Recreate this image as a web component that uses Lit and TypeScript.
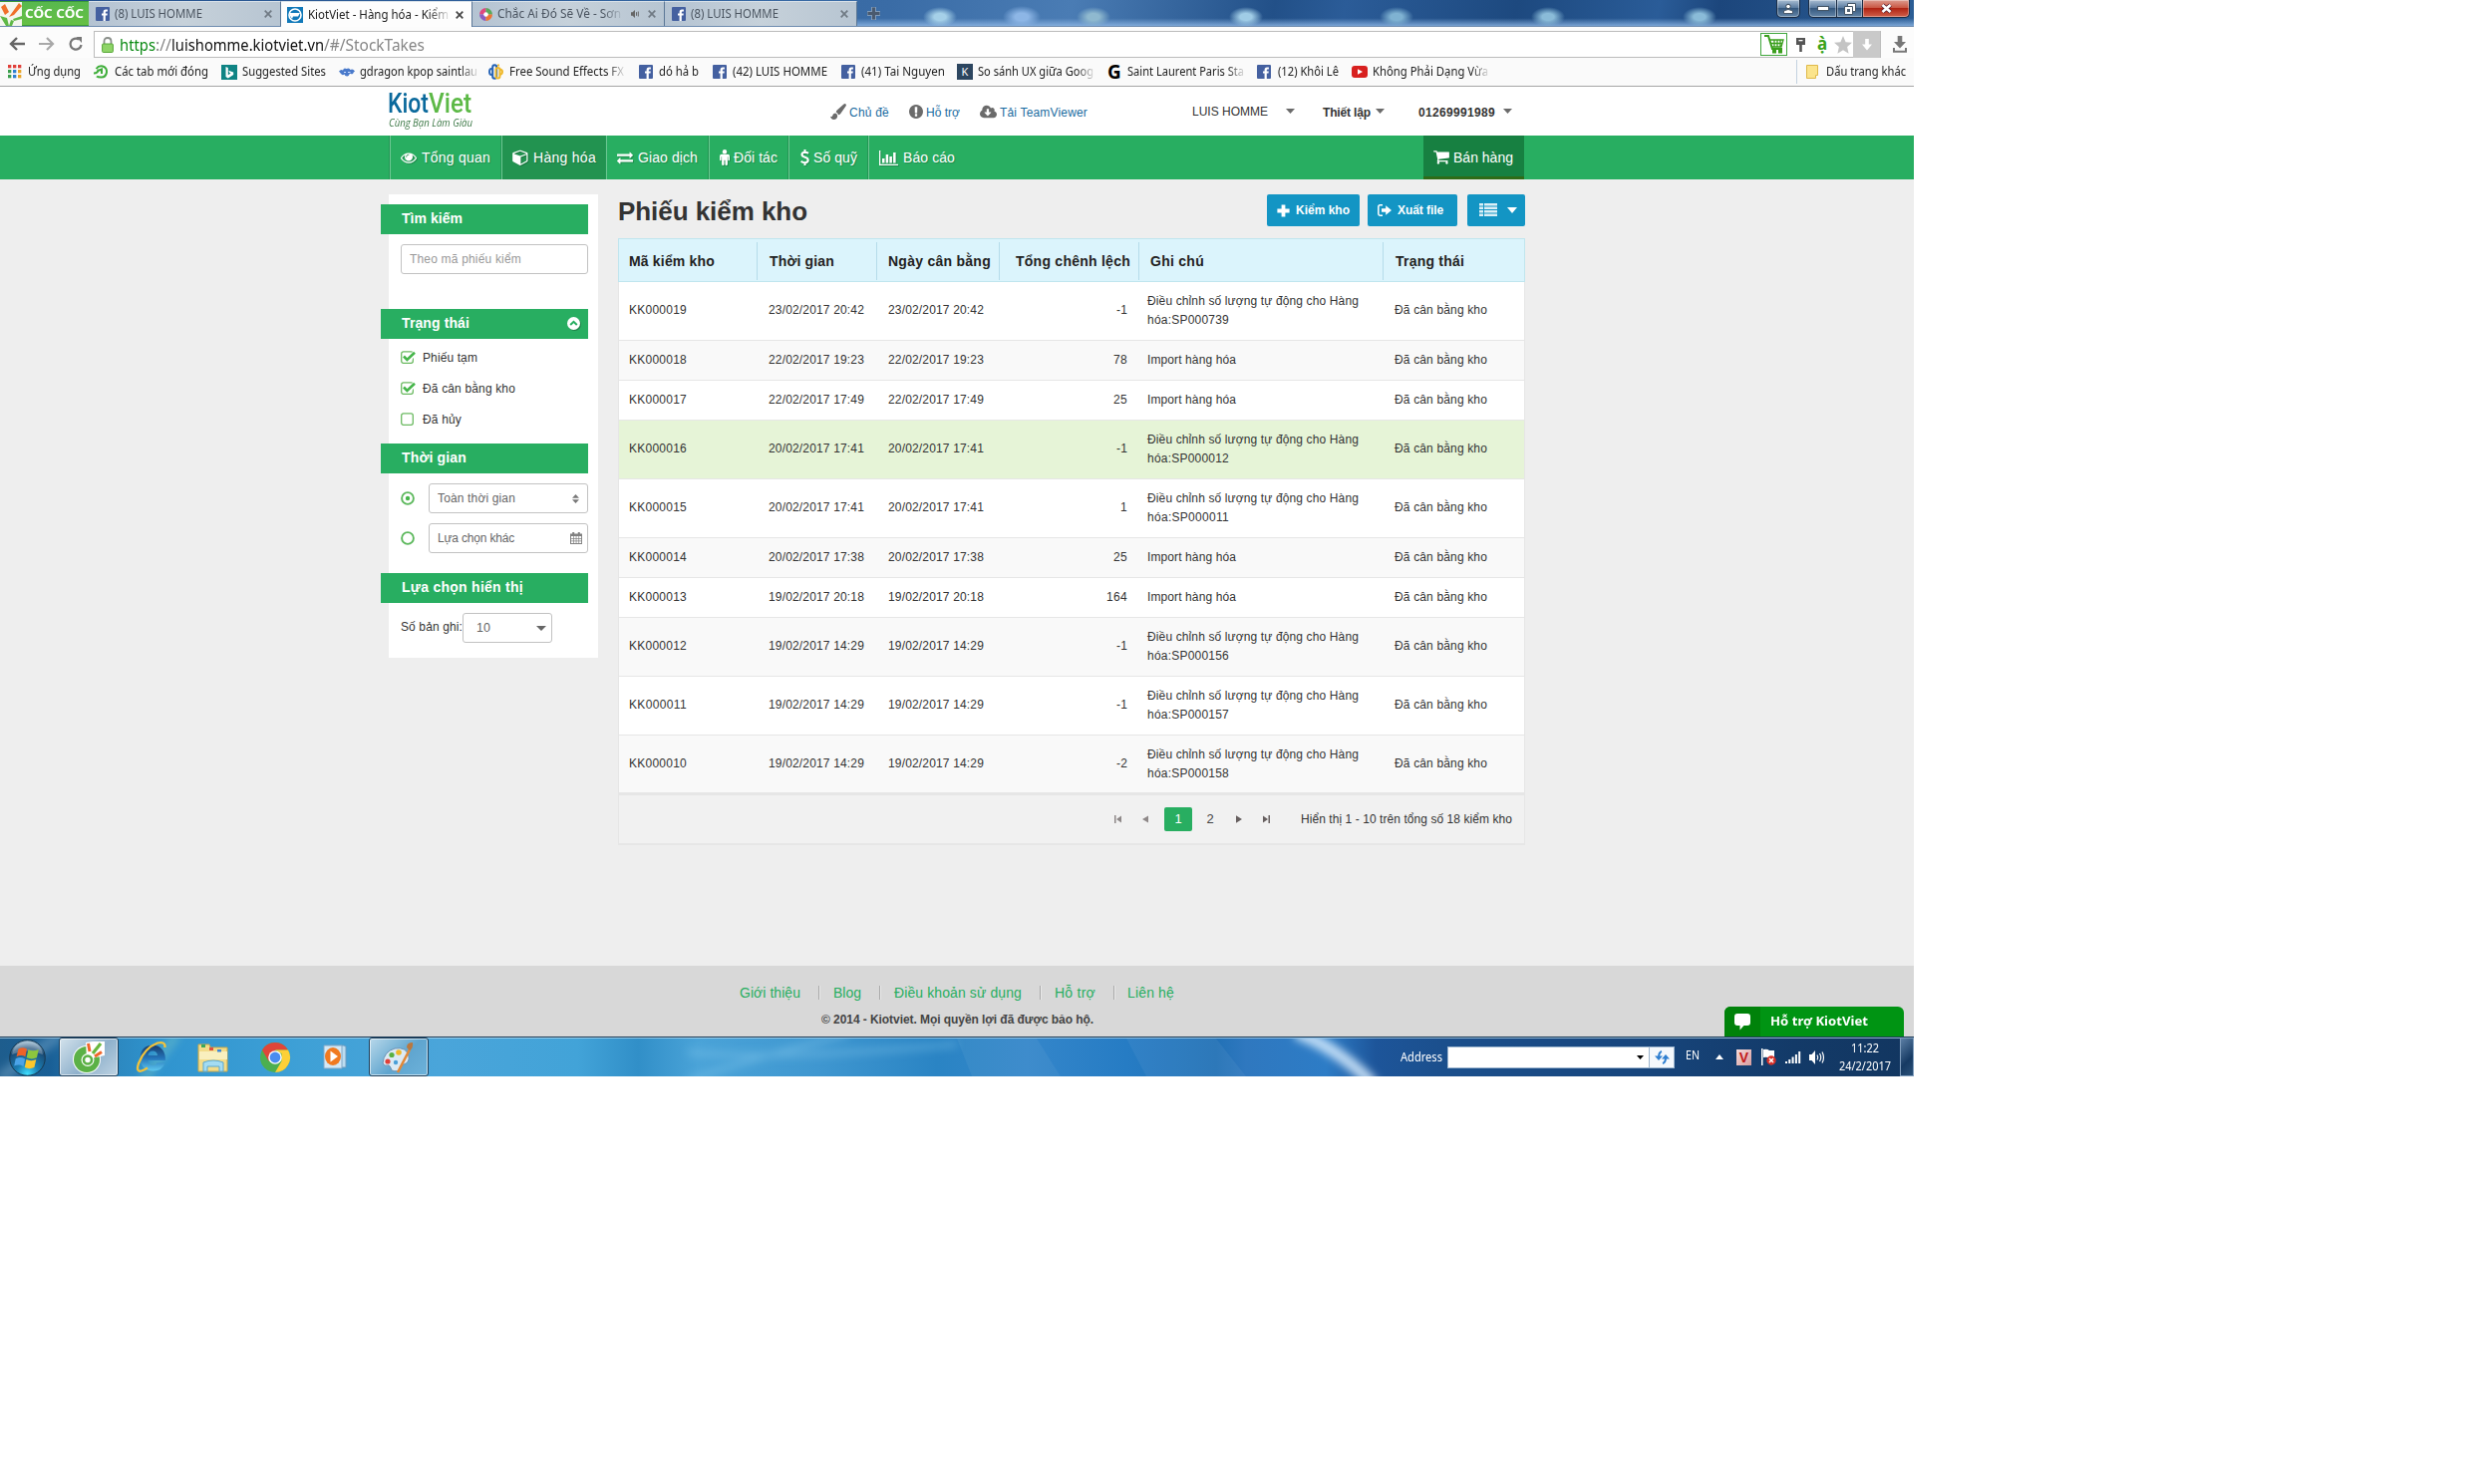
import { LitElement, html, css, svg, nothing } from "lit";
import { customElement, property } from "lit/decorators.js";
import { classMap } from "lit/directives/class-map.js";
import { styleMap } from "lit/directives/style-map.js";

/** One line of text set to an exact measure, by tracking or by squeezing the glyphs. */
@customElement("fit-text")
class FitText extends LitElement {
  @property({ type: Number }) w = 0;
  @property() text = "";
  @property({ type: Boolean }) squeeze = false;
  static styles = css`
    :host { display: inline-block; flex: none; white-space: nowrap; }
    .t { display: inline-block; transform-origin: 0 50%; white-space: pre; }
  `;
  render() {
    return html`<span class="t">${this.text}</span>`;
  }
  updated() {
    const t = this.renderRoot.querySelector<HTMLElement>(".t")!;
    t.style.letterSpacing = "";
    t.style.transform = "";
    this.style.width = `${this.w}px`;
    const natural = t.getBoundingClientRect().width;
    if (this.squeeze) t.style.transform = `scaleX(${this.w / natural})`;
    else t.style.letterSpacing = `${(this.w - natural) / [...this.text].length}px`;
  }
}

const ft = (text: string, w: number) => html`<fit-text .text=${text} .w=${w}></fit-text>`;
const sq = (text: string, w: number) => html`<fit-text .text=${text} .w=${w} squeeze></fit-text>`;
const ico = (w: number, h: number, body: unknown, vb = `0 0 ${w} ${h}`) =>
  html`<svg class="ico" width=${w} height=${h} viewBox=${vb}>${body}</svg>`;

/* ---------- icons ---------- */
const eye = ico(16, 16, svg`<path fill="currentColor" d="M1664 960q-152-236-381-353 61 104 61 225 0 185-131.5 316.5t-316.5 131.5-316.5-131.5-131.5-316.5q0-121 61-225-229 117-381 353 133 205 333.5 326.5t434.5 121.5 434.5-121.5 333.5-326.5zm-720-384q0-20-14-34t-34-14q-125 0-214.5 89.5t-89.5 214.5q0 20 14 34t34 14 34-14 14-34q0-86 61-147t147-61q20 0 34-14t14-34zm848 384q0 34-20 69-140 230-376.5 368.5t-499.5 138.5-499.5-139-376.5-368q-20-35-20-69t20-69q140-229 376.5-368t499.5-139 499.5 139 376.5 368q20 35 20 69z"/>`, "0 0 1792 1792");
const cube = ico(16, 16, svg`<path fill="currentColor" d="M896 1629l640-349v-636l-640 233v752zm-64-865l698-254-698-254-698 254zm832-252v768q0 35-18 65t-49 47l-704 384q-28 16-61 16t-61-16l-704-384q-31-17-49-47t-18-65v-768q0-40 23-73t61-47l704-256q22-8 44-8t44 8l704 256q38 14 61 47t23 73z"/>`, "-20 60 1740 1740");
const exchange = ico(16, 16, svg`<path fill="currentColor" d="M1792 1184v192q0 13-9.500 22.500t-22.500 9.500h-1376v192q0 13-9.500 22.500t-22.500 9.500q-12 0-24-10l-319-320q-9-9-9-22 0-14 9-23l320-320q9-9 23-9 13 0 22.500 9.500t9.500 22.500v192h1376q13 0 22.500 9.500t9.500 22.500zm0-544q0 14-9 23l-320 320q-9 9-23 9-13 0-22.500-9.500t-9.500-22.500v-192h-1376q-13 0-22.500-9.500t-9.500-22.500v-192q0-13 9.500-22.500t22.500-9.500h1376v-192q0-14 9-23t23-9q12 0 24 10l319 319q9 9 9 23z"/>`, "0 0 1792 1792");
const male = ico(10, 16, svg`<circle cx="5" cy="2.200" r="2.200" fill="currentColor"/><path fill="currentColor" d="M2 4.800h6q2 0 2 2v3.500q0 .9-.8.9t-.8-.9V7.200h-.5v7.600q0 1.200-1.200 1.200t-1.200-1.200v-4h-1v4Q4.500 16 3.300 16t-1.200-1.200V7.200h-.5v3.100q0 .9-.8.9T0 10.300V6.800q0-2 2-2z"/>`);
const dollar = ico(9, 16, svg`<path fill="none" stroke="currentColor" stroke-width="2.100" d="M8 3.900Q6.500 2.700 4.500 2.700 1.500 2.800 1.500 5.100 1.500 7 4.500 7.700 7.700 8.500 7.700 10.800 7.600 13.200 4.500 13.300 2.200 13.300 .7 11.800M4.500 0v3M4.500 13v3"/>`);
const chart = ico(19, 15, svg`<path fill="currentColor" d="M0 0h1.300v13.700H19V15H0zM3 8h2.500v4.500H3zM6.700 4h2.500v8.500H6.700zM10.400 6h2.500v6.500h-2.500zM14.100 2h2.500v10.500h-2.500z"/>`);
const cart = ico(16, 16, svg`<path fill="currentColor" d="M704 1536q0 52-38 90t-90 38-90-38-38-90 38-90 90-38 90 38 38 90zm896 0q0 52-38 90t-90 38-90-38-38-90 38-90 90-38 90 38 38 90zm128-1088v512q0 24-16.500 42.500t-40.500 21.500l-1044 122q13 60 13 70 0 16-24 64h920q26 0 45 19t19 45-19 45-45 19h-1024q-26 0-45-19t-19-45q0-11 8-31.500t16-36 21.500-40 15.500-29.500l-177-823h-204q-26 0-45-19t-19-45 19-45 45-19h256q16 0 28.500 6.500t19.500 15.500 13 24.500 8 26 5.500 29.500 4.500 26h1201q26 0 45 19t19 45z"/>`, "60 128 1680 1680");
const brush = ico(16, 16, svg`<path fill="currentColor" d="M15.600.4q.8.800-.1 2.200L10.300 10Q9.200 11.300 8 11.300 7.500 9.200 5.700 8.600 5.900 7.300 7 6.300L13.500.5Q14.800-.4 15.600.4zM5.100 9.600Q7 10.200 7.200 12.200 7 15.900 3.400 16 .6 15.900 0 12.800q1.200.7 2-.2.600-2.800 3.100-3z"/>`);
const exclaim = ico(14, 14, svg`<path fill="currentColor" d="M896 128q209 0 385.500 103t279.500 279.500 103 385.500-103 385.500-279.500 279.500-385.500 103-385.500-103-279.500-279.500-103-385.500 103-385.500 279.500-279.500 385.500-103zm128 1247v-190q0-14-9-23.500t-22-9.500h-192q-13 0-23 10t-10 23v190q0 13 10 23t23 10h192q13 0 22-9.500t9-23.500zm-2-344l18-621q0-12-10-18-10-8-24-8h-220q-14 0-24 8-10 6-10 18l17 621q0 10 10 17.500t24 7.500h185q14 0 23.500-7.500t10.500-17.500z"/>`, "128 128 1536 1536");
const cloud = ico(17, 14, svg`<path fill="currentColor" d="M1216 928q0-14-9-23t-23-9h-224v-352q0-13-9.500-22.500t-22.500-9.500h-192q-13 0-22.500 9.500t-9.500 22.500v352h-224q-13 0-22.500 9.500t-9.500 22.500q0 14 9 23l352 352q9 9 23 9t23-9l351-351q10-12 10-24zm640 224q0 159-112.500 271.500t-271.500 112.500h-1088q-185 0-316.500-131.500t-131.500-316.500q0-130 70-240t188-165q-2-30-2-43 0-212 150-362t362-150q156 0 285.500 87t188.500 231q71-62 166-62 106 0 181 75t75 181q0 76-41 138 130 31 213.500 135.500t83.500 238.500z"/>`, "-64 128 1920 1408");
const plus = ico(13, 13, svg`<path fill="currentColor" d="M4.600.4h3.800v4.200h4.200v3.800H8.400v4.200H4.600V8.400H.4V4.600h4.200z"/>`);
const exportIcon = ico(14, 12, svg`<path fill="none" stroke="currentColor" stroke-width="1.500" d="M5 .8H2.500Q.8.800.8 2.500v7q0 1.700 1.700 1.700H5"/><path fill="currentColor" d="M4 4.200h4.200V1.200L14 6l-5.800 4.800V7.800H4z"/>`);
const list = ico(18, 14, svg`<path fill="currentColor" fill-opacity=".85" d="M0 0h4v2.500H0zM5 0h13v2.500H5zM0 3.500h4V6H0zM5 3.500h13V6H5zM0 7h4v2.500H0zM5 7h13v2.500H5zM0 10.500h4V13H0zM5 10.500h13V13H5z"/>`);
const caret = (w: number, h: number) => ico(w, h, svg`<path fill="currentColor" d=${`M0 0h${w}L${w / 2} ${h}z`}/>`);
const chevron = ico(13, 13, svg`<circle cx="6.500" cy="6.500" r="6.500" fill="#fff"/><path fill="none" stroke="#27ae60" stroke-width="2" d="M3.200 8l3.300-3.200L9.800 8"/>`);
const check = (on: boolean) => ico(15, 13, svg`<rect x=".7" y=".9" width="11.600" height="11.400" rx="2" fill="none" stroke="#6cba62" stroke-width="1.300"/>${on ? svg`<path fill="none" stroke="#fff" stroke-width="4.500" d="M9 8l5-6"/><path fill="none" stroke="#45b549" stroke-width="2.600" d="M3 5.500l3.400 3.500L14 1.700"/>` : nothing}`);
const radio = (on: boolean) => ico(14, 14, svg`<circle cx="7" cy="7" r="5.900" fill="#fff" stroke="#5cb85c" stroke-width="1.900"/>${on ? svg`<circle cx="7" cy="7" r="2.200" fill="#45b549"/>` : nothing}`);
const sort = ico(7, 9, svg`<path fill="#777" d="M0 3.700L3.500 0 7 3.700zM0 5.300h7L3.500 9z"/>`);
const calendar = ico(12, 12, svg`<path fill="#808080" d="M0 1.500h12V12H0zM2.200 0h2v2h-2zM7.800 0h2v2h-2z"/><path fill="#fff" d="M1 4h2v2H1zM3.700 4h2v2h-2zM6.400 4h2v2h-2zM9.100 4h2v2h-2zM1 6.700h2v1.800H1zM3.700 6.700h2v1.800h-2zM6.400 6.700h2v1.800h-2zM9.100 6.700h2v1.800h-2zM1 9.200h2V11H1zM3.700 9.200h2V11h-2zM6.400 9.200h2V11h-2zM9.100 9.200h2V11h-2z"/>`);

const fb = ico(14, 14, svg`<rect width="14" height="14" rx="1" fill="#4460a0"/><path fill="#fff" d="M7.600 14V8.500H6V6.500h1.600V5.200Q7.600 2.600 10 2.600h1.900v2h-1.200q-.9 0-.9.800v1.100h2l-.3 2H9.800V14z"/>`);
const apps = ico(14, 14, svg`${[0, 1, 2].map((r) => [0, 1, 2].map((c) => svg`<rect x=${c * 5} y=${r * 5} width="3.300" height="3.300" fill=${["#e0403a", "#e0403a", "#e0403a", "#3b9e4c", "#2d7fd0", "#e8a325", "#3b9e4c", "#2d7fd0", "#e8a325"][r * 3 + c]}/>`))}`);
const recent = ico(15, 14, svg`<path fill="none" stroke="#3fae3a" stroke-width="2" d="M2.500 4Q5 .6 9 1.500q4.500 1.500 4 6Q12.300 12.500 7.500 12.500 4 12.500 3 11.500M0 8.500Q4.500 8.500 4.500 4.500M4 6l4-1.500V9"/>`);
const bing = ico(16, 15, svg`<rect width="16" height="15" fill="#0f8484"/><path fill="#fff" d="M4.500 2l2.300.9v7.300l2.800-1.600-1.400-.7-.9-2.200 4.900 1.800v2.600l-5.400 3.300-2.300-1.300z"/>`);
const baidu = ico(16, 9, svg`<path fill="#4a7acb" d="M0 3.500Q2 1 4 2.500 5-.5 7.500 1q3-1.500 4 1Q14 .5 16 3.500q-1.500.5-2 2.500-2 .5-3-.3Q9.500 9 8 8.500 6 8.500 5.500 6.500 3.500 8 2 6z"/><path stroke="#cfe0ff" d="M5 4.500h2M9 4.500h2.500"/>`);
const sound = ico(15, 16, svg`<rect x="4.200" y="1.200" width="4" height="13.500" rx="2" fill="none" stroke="#2361b5" stroke-width="2"/><rect x="7.500" y="4" width="4" height="10.500" rx="2" fill="none" stroke="#efb92c" stroke-width="2"/><path fill="none" stroke="#2a66b8" stroke-width="2" d="M5 5H3Q1 5 1 8t2 3h2"/><path fill="none" stroke="#efb92c" stroke-width="2" d="M9 1.500h2M11 5.500q3 0 3 2.500t-3 3"/>`);
const kIcon = html`<span class="k">K</span>`;
const gIcon = html`<span class="g">G</span>`;
const youtube = ico(16, 12, svg`<rect width="16" height="12" rx="3" fill="#d8201f"/><path fill="#fff" d="M6 3.200v5.600L11 6z"/>`);
const kiotTab = ico(16, 16, svg`<rect width="16" height="16" fill="#1179b9"/><circle cx="8" cy="8" r="6" fill="none" stroke="#fff" stroke-width="1.600"/><path fill="#fff" d="M3 6h10L11 9.500H6L5 12 3 9z"/>`);
const musicTab = ico(13, 13, svg`<path fill="#e0487f" d="M6.500 6.500V0A6.500 6.500 0 0 0 0 6.500z"/><path fill="#5ba85a" d="M6.500 6.500H13A6.500 6.500 0 0 0 6.500 0z"/><path fill="#8d5cc0" d="M6.500 6.500V13A6.500 6.500 0 0 1 0 6.500z"/><path fill="#ee7434" d="M6.500 6.500H13A6.500 6.500 0 0 1 6.500 13z"/><circle cx="6.500" cy="6.500" r="2.300" fill="#fff"/>`);
const cross = ico(8, 8, svg`<path stroke="currentColor" stroke-width="1.700" d="M.7.700l6.600 6.600M7.300.7L.7 7.300"/>`);
const speaker = ico(8, 10, svg`<path fill="#666" d="M0 3.300h1.600L4 1v8L1.600 6.700H0z"/><path stroke="#666" fill="none" d="M5.500 3.200v3.600M7.300 2.500v5"/>`);

/* ---------- data ---------- */
const bookmarks = [
  { start: 8, icon: apps, text: "Ứng dụng", at: 28, w: 53 },
  { start: 94, icon: recent, text: "Các tab mới đóng", at: 115, w: 94 },
  { start: 222, icon: bing, text: "Suggested Sites", at: 243, w: 84 },
  { start: 340, icon: baidu, text: "gdragon kpop saintlau", at: 361, w: 118, fade: true },
  { start: 490, icon: sound, text: "Free Sound Effects FX", at: 511, w: 115, fade: true },
  { start: 641, icon: fb, text: "dó hả b", at: 661, w: 40 },
  { start: 715, icon: fb, text: "(42) LUIS HOMME", at: 735, w: 95 },
  { start: 844, icon: fb, text: "(41) Tai Nguyen", at: 864, w: 84 },
  { start: 960, icon: kIcon, text: "So sánh UX giữa Goog", at: 981, w: 116, fade: true },
  { start: 1110, icon: gIcon, text: "Saint Laurent Paris Sta", at: 1131, w: 117, fade: true },
  { start: 1261, icon: fb, text: "(12) Khôi Lê", at: 1282, w: 61 },
  { start: 1356, icon: youtube, text: "Không Phải Dạng Vừa", at: 1377, w: 116, fade: true },
  { start: 1802, icon: nothing, text: "", at: 0, w: 0 },
];

const note = (n: string) => ["Điều chỉnh số lượng tự động cho Hàng", `hóa:SP000${n}`];
const imp = ["Import hàng hóa"];
const rows = [
  { id: "KK000019", time: "23/02/2017 20:42", diff: "-1", note: note("739") },
  { id: "KK000018", time: "22/02/2017 19:23", diff: "78", note: imp },
  { id: "KK000017", time: "22/02/2017 17:49", diff: "25", note: imp },
  { id: "KK000016", time: "20/02/2017 17:41", diff: "-1", note: note("012"), hover: true },
  { id: "KK000015", time: "20/02/2017 17:41", diff: "1", note: note("011") },
  { id: "KK000014", time: "20/02/2017 17:38", diff: "25", note: imp },
  { id: "KK000013", time: "19/02/2017 20:18", diff: "164", note: imp },
  { id: "KK000012", time: "19/02/2017 14:29", diff: "-1", note: note("156") },
  { id: "KK000011", time: "19/02/2017 14:29", diff: "-1", note: note("157") },
  { id: "KK000010", time: "19/02/2017 14:29", diff: "-2", note: note("158") },
];

const menu = [
  { w: 112, pad: 10, icon: eye, gap: 5, text: "Tổng quan", tw: 69 },
  { w: 105, pad: 10, icon: cube, gap: 5, text: "Hàng hóa", tw: 63, active: true },
  { w: 103, pad: 10, icon: exchange, gap: 5, text: "Giao dịch", tw: 60 },
  { w: 80, pad: 10, icon: male, gap: 4, text: "Đối tác", tw: 44 },
  { w: 80, pad: 11, icon: dollar, gap: 4, text: "Số quỹ", tw: 44 },
  { w: 120, pad: 10, icon: chart, gap: 5, text: "Báo cáo", tw: 52 },
];

@customElement("app-root")
class AppRoot extends LitElement {
  static styles = css`
    :host { display: block; width: 2500px; height: 1489px; background: #fff; font: 12px "Liberation Sans", Arial, sans-serif; color: #333; }
    * { box-sizing: border-box; }
    .ico { display: block; flex: none; overflow: visible; }
    .screen { width: 1920px; height: 1080px; display: flex; flex-direction: column; overflow: hidden; }
    .ui { font-family: "Noto Sans", "Open Sans", sans-serif; }

    .strip { height: 27px; display: flex; flex: none; align-items: stretch; border-bottom: 1px solid #6f8db0;
      background:
        radial-gradient(ellipse 17px 10px at 943px 17px, #a5d0e8 35%, transparent),
        radial-gradient(ellipse 19px 11px at 1025px 17px, #8db6e6 35%, transparent),
        radial-gradient(ellipse 17px 10px at 1097px 17px, #8fb9cf 35%, transparent),
        radial-gradient(ellipse 17px 10px at 1250px 17px, #a0cce6 35%, transparent),
        radial-gradient(ellipse 17px 10px at 1401px 17px, #7fb2d2 35%, transparent),
        radial-gradient(ellipse 17px 10px at 1553px 17px, #8abbd8 35%, transparent),
        radial-gradient(ellipse 17px 10px at 1705px 17px, #8abbd8 35%, transparent),
        linear-gradient(180deg, transparent 70%, rgba(150, 190, 235, .75)),
        linear-gradient(100deg, #24518c 0, #3a6ca6 880px, #4a7cb4 1060px, #225088 1260px, #2b5c98 1330px, #1d497f 1500px, #2a5c98 1640px, #1c467c 1700px, #2d6098 1920px); }
    .brand { width: 89px; margin-top: 1px; background: linear-gradient(#58b84e, #66c044); border: 1px solid #3a9a3a; border-width: 1px 0; display: flex; align-items: center; }
    .brand fit-text { color: #fff; font-weight: 700; font-size: 12px; line-height: 24px; margin-left: 3px; }
    .tab { width: 193px; margin-top: 1px; display: flex; align-items: center; padding-left: 7px; border-right: 1px solid #5b7796; background: linear-gradient(90deg, #b4c3d2, #c6d1da 50%, #b7c5d2); color: #4a5460; border-top: 1px solid #d7e0e8; }
    .tab fit-text { margin-left: 5px; line-height: 24px; }
    .tab .x { margin-left: auto; margin-right: 8px; color: #707a84; }
    .tab .spk { margin-left: auto; margin-right: 9px; }
    .tab .spk + .x { margin-left: 0; }
    .tab.on { width: 192px; background: #fdfdfd; height: 27px; color: #222; padding-left: 6px; }
    .tab.on .x { color: #444; }
    .fade { -webkit-mask-image: linear-gradient(90deg, #000 86%, transparent 102%); mask-image: linear-gradient(90deg, #000 86%, transparent 102%); }
    .newtab { margin: 7px 0 0 10px; }
    .win { margin-left: auto; display: flex; align-items: flex-start; padding-right: 4px; }
    .wb { height: 18px; border: 1px solid #1a2c44; border-top: 0; background: linear-gradient(#a9bed3, #52749a 50%, #36597f 50%, #6486a8); display: flex; align-items: center; justify-content: center; box-shadow: inset 0 0 0 1px rgba(255, 255, 255, .35); }
    .wb.user { width: 24px; margin-right: 8px; border-radius: 0 0 5px 5px; }
    .wb.min { width: 29px; border-radius: 0 0 0 5px; }
    .wb.max { width: 26px; border-left: 0; }
    .wb.close { width: 47px; border-left: 0; border-radius: 0 0 5px 0; background: linear-gradient(#dc9c90, #c8503c 50%, #b02414 50%, #d0604a); }

    .tool { height: 31px; flex: none; display: flex; padding: 4px 0 0 9px; background: #fcfcfc; }
    .tool .nav { display: flex; flex: none; align-items: center; height: 26px; width: 85px; }
    .nav .fwd { margin-left: 14px; }
    .nav .rel { margin-left: 15px; }
    .url { width: 1793px; flex: none; height: 27px; border: 1px solid #bcbcbc; background: #fff; display: flex; align-items: center; font-size: 16px; padding-left: 7px; color: #868686; }
    .url fit-text { line-height: 22px; }
    .proto { color: #0b8a14; margin-left: 6px; }
    .host { color: #111; }
    .actions { margin-left: auto; display: flex; align-items: center; height: 25px; }
    .shop { width: 27px; height: 23px; border: 1px solid #41a63d; display: flex; align-items: center; justify-content: center; margin-right: 9px; }
    .lang { color: #3aa31a; font: 700 17px/22px "Noto Sans", sans-serif; width: 10px; margin: -1px 7px 0 12px; }
    .dl { width: 27px; height: 27px; background: #c9c9c9; display: flex; align-items: center; justify-content: center; margin-left: 1px; }
    .tray { margin-left: 12px; margin-top: 5px; }

    .marks { height: 29px; flex: none; display: flex; align-items: center; padding-left: 8px; background: #fafafa; border-bottom: 1px solid #a5a5a5; color: #222; }
    .mark { display: flex; align-items: center; flex: none; height: 28px; }
    .slot { display: flex; align-items: center; flex: none; }
    .mark fit-text, .other fit-text { line-height: 26px; }
    .other { display: flex; align-items: center; height: 24px; border-left: 1px solid #c3d2e0; padding-left: 9px; }
    .other fit-text { margin-left: 8px; }
    .k { width: 16px; height: 16px; background: #2d4660; color: #fff; font: 11px/16px "Noto Sans", sans-serif; text-align: center; }
    .g { width: 16px; color: #000; font: 700 19px/20px "Open Sans", sans-serif; text-align: center; }

    .head { height: 49px; flex: none; display: flex; background: #fff; padding-left: 389px; }
    .logo { width: 85px; margin-right: 359px; font-family: Roboto, sans-serif; height: 49px; padding-top: 5px; color: #0a699c; font-size: 28px; font-weight: 500; }
    .logo .name { display: flex; line-height: 26px; margin-top: -1px; }
    .logo .viet { color: #5cb946; }
    .logo .tag { font: italic 500 11px/13px "Open Sans", sans-serif; color: #3c7846; display: block; margin: -1px 0 0 1px; }
    .links { display: flex; align-items: center; height: 49px; color: #6b6b6b; }
    .links a { color: #1a6ba0; margin: 2px 0 0 3px; }
    .links .l2 { margin-left: 20px; }
    .links .user { color: #333; margin-left: 105px; }
    .links .b { font-weight: 700; color: #333; margin-top: 2px; }
    .links .setup { margin-left: 28px; }
    .links .phone { margin-left: 34px; }
    .links fit-text { line-height: 18px; }
    .c1 { margin-left: 18px; } .c2 { margin-left: 5px; } .c3 { margin-left: 8px; }

    .menu { height: 44px; flex: none; background: #28ae61; display: flex; padding-left: 391px; color: #fff; font-size: 14px; }
    .mi { display: flex; align-items: center; border-left: 1px solid #6cc892; box-shadow: -1px 0 0 #239654; }
    .mi fit-text { text-shadow: 1px 1px 1px rgba(0, 0, 0, .2); line-height: 20px; }
    .mi .ico { filter: drop-shadow(1px 1px 0 rgba(0, 0, 0, .2)); }
    .mi.active { background: #229350; }
    .sell { margin-left: auto; margin-right: 391px; width: 101px; background: #178041; border-bottom: 3px solid #2f6b17; display: flex; align-items: center; padding: 3px 0 0 10px; }
    .sell fit-text { margin-left: 4px; line-height: 20px; }

    .page { height: 789px; flex: none; background: #eee; display: flex; align-items: flex-start; padding: 15px 0 0 390px; }
    .side { width: 210px; height: 465px; background: #fff; padding: 10px 10px 0 0; }
    .sh { margin-left: -8px; height: 30px; background: #28ae61; color: #fff; font-weight: 700; font-size: 14px; display: flex; align-items: center; justify-content: space-between; padding: 0 8px 2px 21px; }
    .sh .ico { filter: drop-shadow(1px 1px 0 rgba(0, 0, 0, .25)); }
    .field { height: 30px; border: 1px solid #c2c2c2; border-radius: 3px; display: flex; align-items: center; background: #fff; color: #666; padding: 0 8px; justify-content: space-between; }
    .search { margin: 10px 0 35px 12px; color: #999; }
    .checks { height: 105px; padding: 3px 0 0 12px; }
    .ck { height: 31px; display: flex; align-items: center; }
    .ck fit-text { margin-left: 7px; line-height: 20px; margin-top: 1px; }
    .rad { display: flex; align-items: center; padding-left: 12px; margin-top: 10px; }
    .rad .field { width: 160px; margin-left: 14px; }
    .rad .field.cal { padding-right: 5px; }
    .rad + .sh { margin-top: 20px; }
    .count { display: flex; align-items: center; padding-left: 12px; margin-top: 10px; }
    .count > fit-text { margin-top: -2px; }
    .count .field { width: 90px; padding: 0 5px 0 13px; font-size: 12.5px; color: #666; }

    .main { width: 910px; margin-left: 20px; }
    .top { display: flex; height: 44px; align-items: flex-start; }
    .top h1 { margin: 0 auto 0 0; font-size: 26px; line-height: 34px; color: #333; font-weight: 700; }
    .btn { height: 32px; background: #1395c4; color: #fff; border-radius: 2px; font-weight: 700; display: flex; align-items: center; padding-left: 10px; }
    .btn fit-text { margin-left: 6px; line-height: 20px; }
    .b1 { width: 93px; margin-right: 8px; } .b2 { width: 90px; margin-right: 10px; } .b3 { width: 58px; padding: 0 0 1px 12px; }
    .b3 .ico + .ico { margin-left: 10px; }
    .grid-head, .row { display: grid; grid-template-columns: 139px 120px 123px 140px 245px 1fr; }
    .grid-head { height: 44px; background: #dbf4fc; border: 1px solid #c0e5ee; font-weight: 700; font-size: 14px; color: #222; }
    .grid-head div { height: 38px; margin-top: 3px; border-right: 1px solid #b5dcea; display: flex; align-items: center; padding: 0 0 1px 11px; }
    .grid-head div:first-child { padding-left: 10px; }
    .grid-head div:nth-child(2) { padding-left: 12px; }
    .grid-head div:last-child { border: 0; padding-left: 12px; }
    .grid-head div.r { padding-left: 16px; }
    .body { border: 1px solid #e6e6e6; border-top: 0; }
    .row { border-bottom: 1px solid #e6e6e6; padding: 10px 0; background: #fff; align-items: center; line-height: 19px; }
    .row:nth-child(even) { background: #f9f9f9; }
    .row.hover { background: #e6f4d7; }
    .row:last-child { border: 0; padding-bottom: 9px; }
    .row div { padding-left: 10px; display: flex; flex-direction: column; align-items: flex-start; }
    .row div.wide { padding-left: 11px; }
    .row div.r { align-items: flex-end; padding-right: 12px; }
    .row.tall > div:not(.note) { padding-bottom: 1px; margin-top: -1px; }
    .row fit-text { height: 19px; }
    .row .note { padding-left: 8px; }
    .pager { height: 52px; border: solid #e6e6e6; border-width: 2px 1px; background: #f1f1f1; display: flex; align-items: center; padding: 0 0 1px 497px; color: #665f5f; }
    .pager .dim { color: #8e8888; }
    .pg { width: 28px; height: 24px; border-radius: 2px; font-size: 13px; line-height: 23px; text-align: center; color: #444; }
    .pg.on { background: #28ae61; color: #fff; margin: 0 4px 0 16px; }
    .sp1 { margin-left: 21px; } .sp2 { margin-left: 12px; }
    .pager fit-text { color: #333; margin-left: 31px; line-height: 20px; }

    .foot { height: 71px; flex: none; background: #d8d8d8; display: flex; }
    .fl { width: 1730px; padding-top: 18px; }
    .fnav { display: flex; align-items: center; padding-left: 742px; height: 18px; font-size: 14px; color: #28ae61; }
    .fnav i { width: 1px; height: 14px; background: #aaa; box-shadow: 1px 0 0 #e8e8e8; margin: 0 14px 0 18px; }
    .fnav i:last-of-type { margin-right: 13px; }
    .fnav fit-text { line-height: 18px; }
    .copy { padding-left: 824px; margin-top: 9px; font-weight: 700; color: #444; line-height: 18px; }
    .chat { align-self: flex-end; width: 180px; height: 30px; background: #009413; border-radius: 6px 6px 0 0; display: flex; align-items: center; overflow: hidden; color: #fff; font-weight: 700; font-size: 13px; }
    .chat .bub { width: 36px; height: 30px; background: #00820a; display: flex; align-items: center; justify-content: center; }
    .chat fit-text { margin-left: 10px; line-height: 26px; margin-top: -2px; }

    .task { height: 40px; flex: none; border-top: 1px solid #1b3a56; display: flex; align-items: center; color: #fff; box-shadow: inset 0 1px 0 rgba(190, 225, 245, .7); position: relative;
      background: linear-gradient(90deg, #1e5d8d 0, #195f96 50px, #2c86bd 110px, #2f94cf 160px, #3ea0d6 300px, #4aa5da 440px, #42a3d8 580px, #318fc8 640px, #4aa3d8 700px, #3f97d0 820px, #2a84c4 940px, #3486ca 1030px, #267cc4 1130px, #2271b6 1220px, #2f78bf 1250px, #2d7cc6 1330px, #1d559a 1380px, #1b4f8c 1450px, #17457c 1650px, #133a68 1800px, #123660 1920px); }
    .beams { position: absolute; left: 0; top: 1px; }
    .task > :not(.beams) { position: relative; }
    .orb { margin-left: 9px; margin-top: 1px; }
    .tb { height: 39px; width: 60px; border: 1px solid #1c3f5c; border-radius: 3px; box-shadow: inset 0 0 0 1px rgba(255, 255, 255, .6); display: flex; align-items: center; justify-content: center; }
    .tb.cc { margin-left: 13px; background: linear-gradient(135deg, #d3e2ec, #8fb1cc 55%, #bed3e2); }
    .tb.pt { margin-left: 18px; background: linear-gradient(135deg, #b8d8ea, #5fa5cf 55%, #6db2da); }
    .q1 { margin-left: 17px; } .q2 { margin-left: 31px; } .q3 { margin-left: 31px; } .q4 { margin-left: 33px; }
    .addr { margin-left: auto; }
    .task fit-text { line-height: 18px; }
    .abox { width: 203px; height: 22px; background: #fff; margin-left: 5px; border: 1px solid #9db6cf; display: flex; align-items: center; justify-content: flex-end; padding-right: 5px; color: #000; }
    .go { width: 25px; height: 22px; background: #f4f8fc; border: 1px solid #9db6cf; border-left: 0; display: flex; align-items: center; justify-content: center; }
    .en { margin-left: 11px; margin-top: -4px; }
    .t1 { margin-left: 16px; } .t2 { margin-left: 13px; } .t3 { margin-left: 9px; } .t4 { margin-left: 9px; } .t5 { margin-left: 8px; }
    .v { width: 15px; height: 16px; background: linear-gradient(135deg, #f5dcdc, #d89c9c); color: #c01818; font: 700 14px/16px "Liberation Sans", sans-serif; text-align: center; }
    .clock { width: 52px; margin-left: 15px; display: flex; flex-direction: column; align-items: center; }
    .desk { width: 14px; height: 39px; margin-left: 9px; border: 1px solid #7f9dbd; background: linear-gradient(135deg, #5c7fa5, #163a63 60%, #2a5078); }
  `;

  private tabStrip() {
    return html`<div class="strip ui">
      <div class="brand">${ico(22, 24, svg`<rect width="22" height="24" fill="#f4f6ee"/><path fill="#f0702a" d="M1 5l4-3 4 8-4 3zM19 1l3 3-8 9-5 2z"/><path fill="#5fb947" d="M22 14v3l-8 2-1-2zM0 14l7 2 2 8H6zM11 18l3 1-2 5H9z"/>`)}${sq("CỐC CỐC", 59)}</div>
      <div class="tab">${fb}${sq("(8) LUIS HOMME", 88)}<span class="x">${cross}</span></div>
      <div class="tab on">${kiotTab}<span class="fade">${sq("KiotViet - Hàng hóa - Kiểm", 141)}</span><span class="x">${cross}</span></div>
      <div class="tab">${musicTab}<span class="fade">${sq("Chắc Ai Đó Sẽ Về - Sơn", 124)}</span><span class="spk">${speaker}</span><span class="x">${cross}</span></div>
      <div class="tab">${fb}${sq("(8) LUIS HOMME", 88)}<span class="x">${cross}</span></div>
      <div class="newtab">${ico(13, 13, svg`<path stroke="#e8e0d8" stroke-opacity=".4" stroke-width="5" d="M6.500 0v13M0 6.500h13"/><path stroke="#4a5a6e" stroke-width="3" d="M6.500 .5v12M.5 6.500h12"/>`)}</div>
      <div class="win">
        <span class="wb user">${ico(10, 10, svg`<circle cx="5" cy="2.500" r="2.300" fill="#fff" stroke="#345"/><path d="M.5 9.500V7Q5 4 9.500 7v2.500z" fill="#fff" stroke="#345" stroke-width=".8"/>`)}</span>
        <span class="wb min">${ico(12, 5, svg`<rect x=".5" y=".5" width="11" height="4" fill="#fff" stroke="#456"/>`)}</span>
        <span class="wb max">${ico(12, 12, svg`<path fill="#fff" stroke="#456" d="M3.500.5h8v8h-8z"/><path fill="#fff" stroke="#456" d="M.5 3.500h8v8h-8z"/><path fill="#567" d="M3 6h3v3H3z"/>`)}</span>
        <span class="wb close">${ico(11, 9, svg`<path stroke="#523" stroke-width="4.200" d="M1.500 1l8 7M9.500 1l-8 7"/><path stroke="#fff" stroke-width="2.600" d="M1.500 1l8 7M9.500 1l-8 7"/>`)}</span>
      </div>
    </div>`;
  }

  private toolbar() {
    return html`<div class="tool ui">
      <div class="nav">
        ${ico(16, 14, svg`<path fill="none" stroke="#666" stroke-width="2.400" d="M16 7H2M8 1L2 7l6 6"/>`)}
        <span class="fwd">${ico(15, 14, svg`<path fill="none" stroke="#a8a8a8" stroke-width="2.200" d="M0 7h13M8 1l6 6-6 6"/>`)}</span>
        <span class="rel">${ico(14, 14, svg`<path fill="none" stroke="#777" stroke-width="2.300" d="M10 2.500A5.500 5.500 0 1 0 12.500 8"/><path fill="#777" d="M7.500 0h5.500v6z"/>`)}</span>
      </div>
      <div class="url">
        ${ico(12, 16, svg`<path fill="none" stroke="#8a8f8a" stroke-width="1.800" d="M2.500 8V4.500Q2.500 1 6 1t3.500 3.500V8"/><rect x=".6" y="7" width="10.800" height="8.500" rx="1" fill="#8fd468" stroke="#58a738"/>`)}
        <span class="proto">${sq("https", 36)}</span>${sq("://", 16)}<span class="host">${sq("luishomme.kiotviet.vn", 153)}</span>${sq("/#/StockTakes", 101)}
        <div class="actions">
          <span class="shop">${ico(20, 20, svg`<path fill="none" stroke="#3a9f1c" stroke-width="2" d="M0 1h4l4 13h10"/><path fill="none" stroke="#3a9f1c" stroke-width="1.300" d="M6 5h13l-2 7H8M6.500 8.500h12M10 5v7M13 5v7M16 5v7"/><path fill="#3a9f1c" d="M8 15h4v3.500H8zM14 15h4v3.500h-4z"/>`)}</span>
          ${ico(9, 14, svg`<path fill="#555" d="M0 0h9v7H5.800v7H3.200V7H0z"/><path fill="#fff" d="M2.500 2h4v1.300h-4z"/>`)}
          <span class="lang">ạ̀</span>
          ${ico(18, 18, svg`<path fill="#c4c4c4" d="M9 0l2.600 6.200 6.400.6-4.900 4.300 1.500 6.600L9 14.300l-5.600 3.400 1.500-6.600L0 6.800l6.400-.6z"/>`)}
          <span class="dl">${ico(10, 12, svg`<path fill="#fff" d="M3.200 0h3.600v5.500H10L5 11.500 0 5.500h3.200z"/>`)}</span>
        </div>
      </div>
      <div class="tray">${ico(14, 17, svg`<path fill="#777" d="M4.700 0h4.600v6H13l-6 6.500L1 6h3.700zM0 12h2v2.700h10V12h2v4.700H0z"/>`)}</div>
    </div>`;
  }

  private bookmarkBar() {
    return html`<div class="marks ui">
      ${bookmarks.slice(0, -1).map((b, i) => html`<div class="mark" style=${styleMap({ width: `${bookmarks[i + 1].start - b.start}px` })}>
        <span class="slot" style=${styleMap({ width: `${b.at - b.start}px` })}>${b.icon}</span>
        <span class=${classMap({ fade: !!b.fade })}>${sq(b.text, b.w)}</span>
      </div>`)}
      <div class="other">${ico(12, 14, svg`<path fill="#fbe48c" stroke="#dfb94a" d="M.5.500h11v10h-2v3h-9z"/>`)}${sq("Dấu trang khác", 80)}</div>
    </div>`;
  }

  private header() {
    return html`<div class="head">
      <div class="logo">
        <div class="name">${sq("Kiot", 41)}<span class="viet">${sq("Viet", 43)}</span></div>
        <span class="tag">${sq("Cùng Bạn Làm Giàu", 84)}</span>
      </div>
      <div class="links">
        ${brush}<a>${ft("Chủ đề", 40)}</a>
        <span class="l2">${exclaim}</span><a>${ft("Hỗ trợ", 34)}</a>
        <span class="l2">${cloud}</span><a>${ft("Tải TeamViewer", 88)}</a>
        <span class="user">${ft("LUIS HOMME", 76)}</span><span class="c1">${caret(9, 5)}</span>
        <span class="b setup">${ft("Thiết lập", 48)}</span><span class="c2">${caret(9, 5)}</span>
        <span class="b phone">${ft("01269991989", 77)}</span><span class="c3">${caret(9, 5)}</span>
      </div>
    </div>
    <div class="menu">
      ${menu.map((m) => html`<div class=${classMap({ mi: true, active: !!m.active })} style=${styleMap({ width: `${m.w}px`, paddingLeft: `${m.pad}px`, gap: `${m.gap}px` })}>${m.icon}${ft(m.text, m.tw)}</div>`)}
      <div class="sell">${cart}${ft("Bán hàng", 60)}</div>
    </div>`;
  }

  private sidebar() {
    return html`<div class="side">
      <div class="sh">${ft("Tìm kiếm", 61)}</div>
      <div class="field search">${ft("Theo mã phiếu kiểm", 112)}</div>
      <div class="sh">${ft("Trạng thái", 68)}${chevron}</div>
      <div class="checks">
        <div class="ck">${check(true)}${ft("Phiếu tạm", 55)}</div>
        <div class="ck">${check(true)}${ft("Đã cân bằng kho", 93)}</div>
        <div class="ck">${check(false)}${ft("Đã hủy", 39)}</div>
      </div>
      <div class="sh">${ft("Thời gian", 65)}</div>
      <div class="rad">${radio(true)}<div class="field">${ft("Toàn thời gian", 78)}${sort}</div></div>
      <div class="rad">${radio(false)}<div class="field cal">${ft("Lựa chọn khác", 77)}${calendar}</div></div>
      <div class="sh">${ft("Lựa chọn hiển thị", 122)}</div>
      <div class="count">${ft("Số bản ghi:", 62)}<div class="field">${ft("10", 14)}${caret(10, 5)}</div></div>
    </div>`;
  }

  private table() {
    const line = (t: string) => ft(t, t.startsWith("Đ") ? 212 : t.startsWith("I") ? 89 : 82);
    return html`
      <div class="grid-head">
        <div>${ft("Mã kiểm kho", 86)}</div><div>${ft("Thời gian", 65)}</div><div>${ft("Ngày cân bằng", 103)}</div>
        <div class="r">${ft("Tổng chênh lệch", 115)}</div><div>${ft("Ghi chú", 54)}</div><div>${ft("Trạng thái", 69)}</div>
      </div>
      <div class="body">
        ${rows.map((r) => html`<div class=${classMap({ row: true, tall: r.note.length > 1, hover: !!r.hover })}>
          <div>${ft(r.id, 58)}</div><div class="wide">${ft(r.time, 96)}</div><div class="wide">${ft(r.time, 96)}</div>
          <div class="r">${ft(r.diff, r.diff[0] === "-" ? 11 : r.diff.length * 7)}</div>
          <div class="note">${r.note.map(line)}</div><div class="wide">${ft("Đã cân bằng kho", 93)}</div>
        </div>`)}
      </div>
      <div class="pager">
        <span class="dim">${ico(7, 8, svg`<path fill="currentColor" d="M0 0h1.500v8H0zM7 .5v7L2 4z"/>`)}</span>
        <span class="dim sp1">${ico(6, 8, svg`<path fill="currentColor" d="M6 .5v7L0 4z"/>`)}</span>
        <span class="pg on">1</span><span class="pg">2</span>
        <span class="sp2">${ico(6, 8, svg`<path fill="currentColor" d="M0 .3v7.400L6 4z"/>`)}</span>
        <span class="sp1">${ico(7, 8, svg`<path fill="currentColor" d="M5.500 0H7v8H5.500zM0 .5v7L5 4z"/>`)}</span>
        ${ft("Hiển thị 1 - 10 trên tổng số 18 kiểm kho", 212)}
      </div>`;
  }

  private taskbar() {
    return html`<div class="task ui">
      <svg class="beams" width="1920" height="38" viewBox="0 0 1920 38">
        <defs><filter id="b" filterUnits="userSpaceOnUse" x="0" y="-20" width="1920" height="80"><feGaussianBlur stdDeviation="4"/></filter></defs>
        <g filter="url(#b)" fill="none">
          <path stroke="#dbeeff" stroke-width="12" stroke-opacity=".85" d="M1300 -6Q1340 8 1378 46"/>
          <path stroke="#a8e8c0" stroke-width="7" stroke-opacity=".35" d="M178 -4L142 44"/>
          <path stroke="#9fc4dc" stroke-width="12" stroke-opacity=".35" d="M60 -4L0 40"/>
          <path stroke="#8fd0f0" stroke-width="5" stroke-opacity=".4" d="M690 42Q760 18 850 -4M690 14Q780 22 960 6"/>
        </g>
        <path fill="#fff" fill-opacity=".05" d="M960 0h80l24 38H975zM1130 0h90l30 38h-100z"/>
      </svg>
      <span class="orb">${ico(37, 37, svg`<defs><radialGradient id="o" cx=".5" cy=".95" r=".9"><stop offset="0" stop-color="#3fe0ff"/><stop offset=".35" stop-color="#1b7fb5"/><stop offset=".8" stop-color="#1a4a74"/><stop offset="1" stop-color="#8fb0c8"/></radialGradient></defs><circle cx="18.500" cy="18.500" r="17.800" fill="url(#o)" stroke="#17384f"/><path fill="#fff" fill-opacity=".28" d="M3 15Q5 3 18.500 2 32 3 34 15 18 8 3 15z"/><path fill="#ee6228" d="M9.500 9.500q4-2.500 8.500 0l-1.600 7.700q-4-2.500-8.900 0z"/><path fill="#8cc63e" d="M19.300 10.200q5 2.300 10.500-.2l-1.900 8.300q-5 2.300-10.200 0z"/><path fill="#4ba3e8" d="M6.700 19.200q4.700-2.300 9.400.2l-1.600 7.500q-4.500-2.500-9.300-.3z"/><path fill="#fbc72c" d="M17.400 20q4.900 2.300 9.900 0l-1.900 8q-4.900 2.300-9.600 0z"/>`)}</span>
      <span class="tb cc">${ico(32, 32, svg`<ellipse cx="14" cy="18" rx="14" ry="14" fill="#fff"/><ellipse cx="14" cy="18" rx="13" ry="13" fill="#5bb146"/><path fill="#fff" d="M14 18L13 1 20 0 32 0 32 14z"/><circle cx="15" cy="18.500" r="6.500" fill="#fff"/><circle cx="15" cy="18.500" r="4" fill="none" stroke="#5bb146" stroke-width="2.600"/><path stroke="#f0662a" stroke-width="3" d="M17 10l-1.500-8M22 15l7-4.500"/><path stroke="#67b83e" stroke-width="3.200" d="M20 12l8-10"/>`)}</span>
      <span class="q1">${ico(31, 31, svg`<defs><linearGradient id="ie" x2="0" y2="1"><stop offset="0" stop-color="#173a6a"/><stop offset=".5" stop-color="#2373b8"/><stop offset="1" stop-color="#5fc8f0"/></linearGradient></defs><path fill="url(#ie)" d="M17 3.500Q30 4.500 30 19H12.500q.5 5 5 5 3 0 4-2.500h8Q27 29.500 17.500 29.500 5 29 4.500 16.500 5 4.500 17 3.500zM12.500 14h9.500q-.5-4.500-4.800-4.500-4.200 0-4.700 4.500z"/><path fill="none" stroke="#f3c33a" stroke-width="2.300" d="M29.500 6Q30-.5 22 1.500 9 6.500 3 22q-3 9 3 7.500 3-1 6-3"/>`)}</span>
      <span class="q2">${ico(32, 30, svg`<path fill="#f2dc8a" stroke="#c9a94a" d="M1 2h11l1 3h17v24H1z"/><path fill="#f9efbe" d="M2 9h28v8H2z"/><path fill="#3aa85a" d="M4 2h4v3H4z"/><path fill="#e05040" d="M12 5h4v3h-4z"/><path fill="#3c86d8" d="M20 7h4v2.500h-4z"/><path fill="#a4dcf2" stroke="#5ba8d0" d="M6 20q10-4 20 0v9h-4v-5H10v5H6z"/>`)}</span>
      <span class="q3">${ico(30, 30, svg`<circle cx="15" cy="15" r="15" fill="#4caf50"/><path fill="#e0453a" d="M15 15L2 7.500A15 15 0 0 1 28 7.500H15z"/><path fill="#e0453a" d="M2 7.500L8.500 18.800 15 7.500z"/><path fill="#fdd037" d="M28 7.500A15 15 0 0 1 15 30l6.500-11.200L21.500 11 15 7.500z"/><circle cx="15" cy="15" r="6.800" fill="#fff"/><circle cx="15" cy="15" r="5.400" fill="#4a8cf0"/>`)}</span>
      <span class="q4">${ico(28, 25, svg`<path fill="#bcdcf0" stroke="#6c9cc0" d="M8 1h13l2 1v21H8z"/><path fill="#d2e8f6" stroke="#7fa8c8" d="M1 1h18v23H1z"/><ellipse cx="10" cy="12" rx="8" ry="9" fill="#f07a20"/><path fill="#fff" d="M7.500 6.500v11l7.500-5.500z"/>`)}</span>
      <span class="tb pt">${ico(34, 32, svg`<path fill="#dceaf4" stroke="#6d93b4" d="M1 22Q2 10 13 7q12-2 14 8 1 6-5 8-4 1-4 5-2 3-8 1-2-6-4-5-3 1-5-2z"/><circle cx="6" cy="20" r="2.600" fill="#e04038"/><circle cx="10" cy="13.500" r="2.600" fill="#58b040"/><circle cx="17" cy="11" r="2.800" fill="#f0b828"/><circle cx="14" cy="21" r="2.200" fill="#4a9fd8"/><path stroke="#e08838" stroke-width="2.600" d="M28 8L16 31"/><path fill="#b87840" d="M25 6q0-5 6-5 1 5-3 8z"/>`)}</span>

      <span class="addr">${sq("Address", 42)}</span>
      <span class="abox">${caret(7, 4)}</span>
      <span class="go">${ico(15, 14, svg`<path fill="none" stroke="#2f7fd0" stroke-width="2" d="M7 1Q4 2 4 7M8 13q3-1 3-6"/><path fill="#2f7fd0" d="M0 5.500h8L4 10zM7 8.500h8L11 4z"/>`)}</span>
      <span class="en">${sq("EN", 14)}</span>
      <span class="t1">${ico(8, 5, svg`<path fill="#fff" d="M0 5h8L4 0z"/>`)}</span>
      <span class="t2 v">V</span>
      <span class="t3">${ico(16, 17, svg`<path fill="#fff" d="M1 0h1.500v17H1zM3 1q4-1 6 1h5v8H9Q7 8 3 9z"/><circle cx="11" cy="12" r="4.700" fill="#d83028"/><path stroke="#fff" stroke-width="1.500" d="M9 10l4 4M13 10l-4 4"/>`)}</span>
      <span class="t4">${ico(16, 12, svg`<path fill="#fff" d="M0 10h2v2H0zM3.300 8h2v4h-2zM6.600 5.500h2V12h-2zM9.900 3h2v9h-2zM13.200 0h2v12h-2z"/>`)}</span>
      <span class="t5">${ico(15, 16, svg`<path fill="#fff" d="M0 5h2.500L6 1v14L2.500 11H0z"/><path fill="none" stroke="#fff" stroke-width="1.200" d="M8 5.500q1.500 2.500 0 5M10.500 4q2.500 4 0 8M13 2.500q3 5.500 0 11"/>`)}</span>
      <span class="clock">${sq("11:22", 28)}${sq("24/2/2017", 52)}</span>
      <span class="desk"></span>
    </div>`;
  }

  render() {
    return html`<div class="screen">
      ${this.tabStrip()}${this.toolbar()}${this.bookmarkBar()}${this.header()}
      <div class="page">
        ${this.sidebar()}
        <div class="main">
          <div class="top">
            <h1>${ft("Phiếu kiểm kho", 190)}</h1>
            <div class="btn b1">${plus}${ft("Kiểm kho", 54)}</div>
            <div class="btn b2">${exportIcon}${ft("Xuất file", 46)}</div>
            <div class="btn b3">${list}${caret(10, 6)}</div>
          </div>
          ${this.table()}
        </div>
      </div>
      <div class="foot">
        <div class="fl">
          <div class="fnav">${ft("Giới thiệu", 61)}<i></i>${ft("Blog", 28)}<i></i>${ft("Điều khoản sử dụng", 128)}<i></i>${ft("Hỗ trợ", 41)}<i></i>${ft("Liên hệ", 47)}</div>
          <div class="copy">${ft("© 2014 - Kiotviet. Mọi quyền lợi đã được bảo hộ.", 273)}</div>
        </div>
        <div class="chat ui"><span class="bub">${ico(16, 17, svg`<path fill="#fff" d="M3 0h10q3 0 3 3v6q0 3-3 3H9.500l-4 4.500V12H3Q0 12 0 9V3q0-3 3-3z"/>`)}</span>${sq("Hỗ trợ KiotViet", 98)}</div>
      </div>
      ${this.taskbar()}
    </div>`;
  }
}
